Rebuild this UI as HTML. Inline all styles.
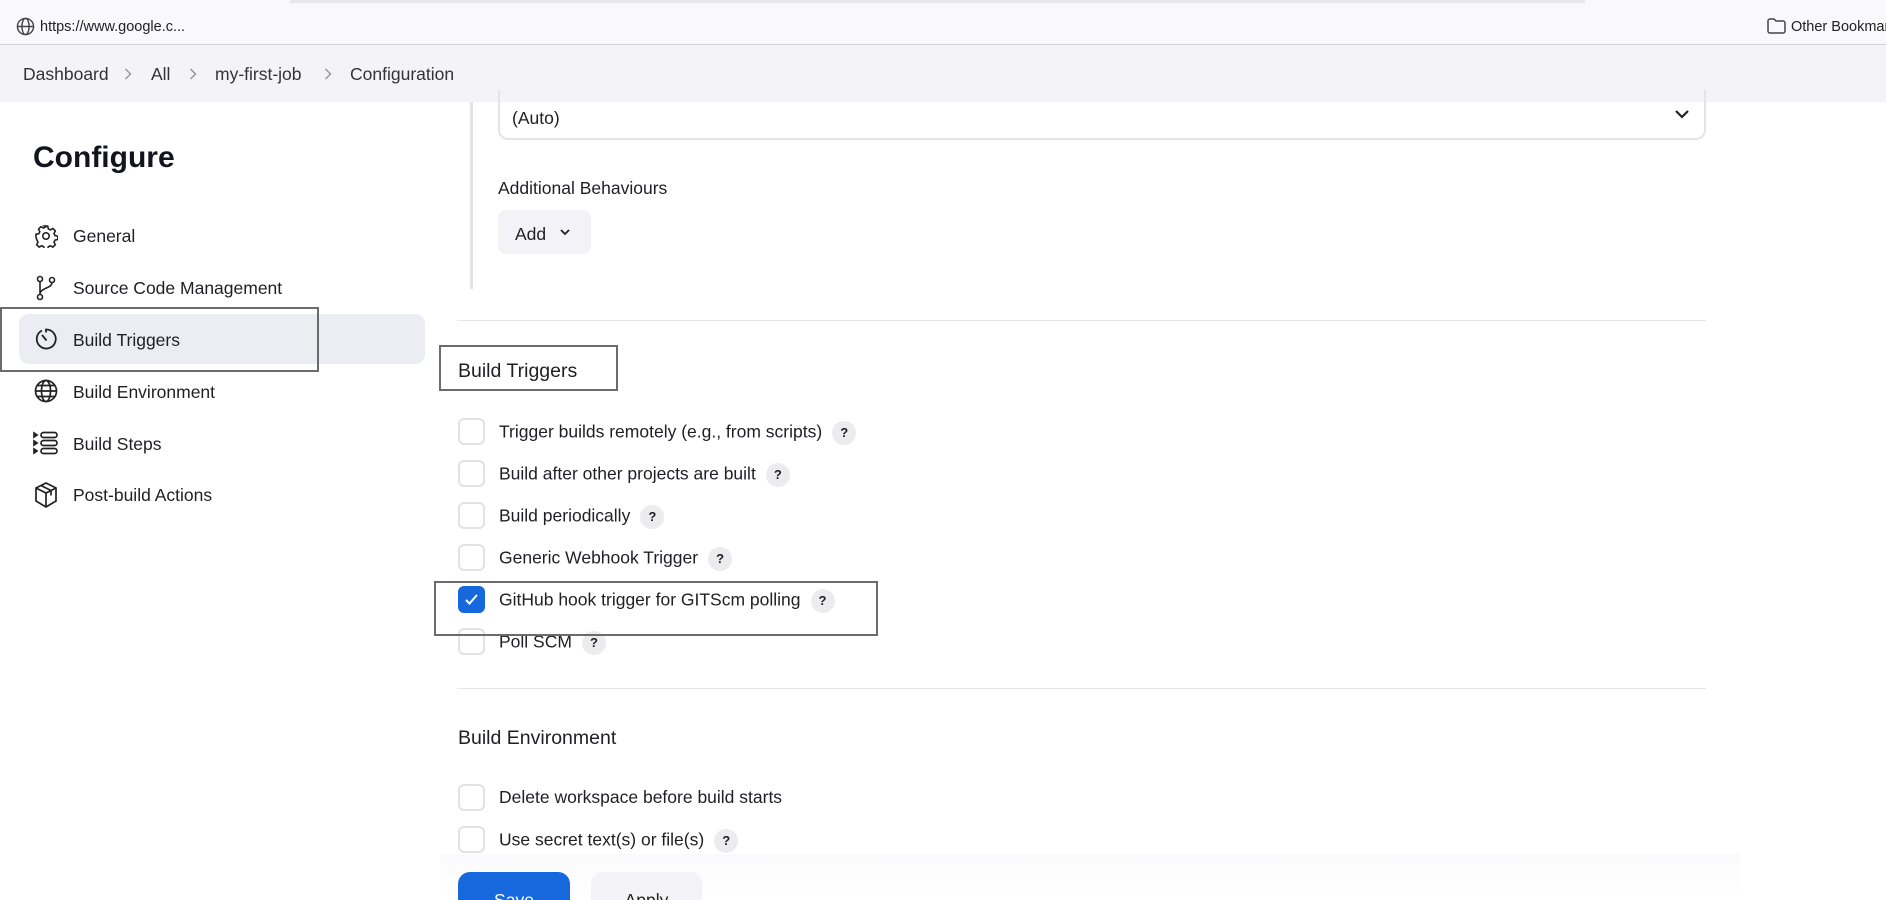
<!DOCTYPE html>
<html><head><meta charset="utf-8"><style>
*{margin:0;padding:0;box-sizing:border-box}
html,body{width:1886px;height:900px;overflow:hidden}
body{background:#fff;font-family:"Liberation Sans",sans-serif;color:#1f1f24;position:relative}
.a{position:absolute;white-space:nowrap}
.topbar{position:absolute;left:0;top:0;width:1886px;height:45px;background:#f9f9fb;border-bottom:1px solid #d3d3d6}
.crumb{position:absolute;left:0;top:45px;width:1886px;height:57px;background:#f4f4f7}
.side{font-size:17.5px}
.cb{position:absolute;width:27px;height:27px;border:2px solid #e2e2e6;border-radius:6px;background:#fff}
.lbl{font-size:17.5px;position:absolute;white-space:nowrap}
.q{display:inline-block;width:24px;height:24px;border-radius:12px;background:#ececef;font-size:13px;font-weight:bold;text-align:center;line-height:24px;margin-left:10px;vertical-align:middle;color:#222}
.box{position:absolute;border:2.5px solid #6b6b6b}
svg{position:absolute}
</style></head><body>
<div class="topbar"></div>
<svg style="left:16px;top:17px" width="19" height="19" viewBox="0 0 20 20" fill="none" stroke="#444" stroke-width="1.5"><circle cx="10" cy="10" r="8.5"/><ellipse cx="10" cy="10" rx="3.8" ry="8.5"/><path d="M1.5 10h17"/></svg>
<div class="a" style="left:40px;top:19px;font-size:14.5px;color:#222">https://www.google.c...</div>
<div class="a" style="left:290px;top:0;width:1295px;height:3px;background:#e8e8ea"></div>
<svg style="left:1767px;top:18px" width="19" height="16" viewBox="0 0 19 16" fill="none" stroke="#444" stroke-width="1.5"><path d="M1 3a2 2 0 0 1 2-2h4l2 2h7a2 2 0 0 1 2 2v8a2 2 0 0 1-2 2H3a2 2 0 0 1-2-2z"/></svg>
<div class="a" style="left:1791px;top:19px;font-size:14.5px;color:#222">Other Bookmarks</div>
<div class="crumb"></div>
<div class="a" style="left:23px;top:64px;font-size:17.5px;color:#333">Dashboard</div>
<svg style="left:124px;top:67px" width="8" height="14" viewBox="0 0 8 14" fill="none" stroke="#999" stroke-width="1.5"><path d="M1.5 2l5 5-5 5"/></svg>
<div class="a" style="left:151px;top:64px;font-size:17.5px;color:#333">All</div>
<svg style="left:189px;top:67px" width="8" height="14" viewBox="0 0 8 14" fill="none" stroke="#999" stroke-width="1.5"><path d="M1.5 2l5 5-5 5"/></svg>
<div class="a" style="left:215px;top:64px;font-size:17.5px;color:#333">my-first-job</div>
<svg style="left:324px;top:67px" width="8" height="14" viewBox="0 0 8 14" fill="none" stroke="#999" stroke-width="1.5"><path d="M1.5 2l5 5-5 5"/></svg>
<div class="a" style="left:350px;top:64px;font-size:17.5px;color:#333">Configuration</div>

<div class="a" style="left:33px;top:141px;font-size:30px;font-weight:bold;color:#14141f">Configure</div>
<div class="a" style="left:19px;top:314px;width:406px;height:50px;background:#ececf3;border-radius:10px"></div>
<div class="box" style="left:0;top:307px;width:319px;height:65px"></div>
<svg style="left:34px;top:224px" width="24" height="24" viewBox="0 0 24 24" fill="none" stroke="#222" stroke-width="1.6"><circle cx="12" cy="12" r="3.2"/><path d="M10.3 2h3.4l.6 2.8 2 1 2.6-1.3 2.4 2.4-1.3 2.6 1 2 2.8.6v3.4l-2.8.6-1 2 1.3 2.6-2.4 2.4-2.6-1.3-2 1-.6 2.8h-3.4l-.6-2.8-2-1-2.6 1.3-2.4-2.4 1.3-2.6-1-2L2 13.7v-3.4l2.8-.6 1-2-1.3-2.6 2.4-2.4 2.6 1.3 2-1z"/></svg>
<div class="a side" style="left:73px;top:226px">General</div>
<svg style="left:34px;top:275px" width="24" height="26" viewBox="0 0 24 26" fill="none" stroke="#222" stroke-width="1.6"><circle cx="6" cy="4" r="2.5"/><circle cx="6" cy="22" r="2.5"/><circle cx="18" cy="5" r="2.5"/><path d="M6 6.5v13M18 7.5c0 6-12 5-12 12"/></svg>
<div class="a side" style="left:73px;top:278px">Source Code Management</div>
<svg style="left:34px;top:327px" width="24" height="24" viewBox="0 0 24 24" fill="none" stroke="#222" stroke-width="1.8"><path d="M8 3.5A9.5 9.5 0 1 0 12 2.5v3"/><path d="M8 8l4.5 5.5"/></svg>
<div class="a side" style="left:73px;top:330px">Build Triggers</div>
<svg style="left:34px;top:379px" width="24" height="24" viewBox="0 0 24 24" fill="none" stroke="#222" stroke-width="1.7"><circle cx="12" cy="12" r="10.5"/><ellipse cx="12" cy="12" rx="4.5" ry="10.5"/><path d="M1.5 12h21M3 6.5h18M3 17.5h18"/></svg>
<div class="a side" style="left:73px;top:382px">Build Environment</div>
<svg style="left:33px;top:431px" width="26" height="24" viewBox="0 0 26 24" fill="none" stroke="#222" stroke-width="1.7"><path d="M1 2l3 2-3 2zM1 10l3 2-3 2zM1 18l3 2-3 2z" fill="#222"/><rect x="8" y="1.5" width="16" height="5" rx="2.5"/><rect x="8" y="9.5" width="16" height="5" rx="2.5"/><rect x="8" y="17.5" width="16" height="5" rx="2.5"/></svg>
<div class="a side" style="left:73px;top:434px">Build Steps</div>
<svg style="left:34px;top:482px" width="24" height="26" viewBox="0 0 24 26" fill="none" stroke="#222" stroke-width="1.7"><path d="M12 1l10 5v13l-10 6-10-6V6z"/><path d="M2 6l10 5 10-5M12 11v14M7 3.5l10 5v5"/></svg>
<div class="a side" style="left:73px;top:485px">Post-build Actions</div>

<div class="a" style="left:470px;top:102px;width:3px;height:187px;background:#e3e3e6"></div>
<div class="a" style="left:498px;top:90px;width:1208px;height:50px;border:2px solid #e4e4e8;border-top:none;border-radius:0 0 10px 10px"></div>
<div class="a" style="left:512px;top:108px;font-size:17.5px">(Auto)</div>
<svg style="left:1674px;top:108px" width="16" height="12" viewBox="0 0 16 12" fill="none" stroke="#222" stroke-width="2.2"><path d="M2 3l6 6 6-6"/></svg>
<div class="a" style="left:498px;top:178px;font-size:17.5px">Additional Behaviours</div>
<div class="a" style="left:498px;top:210px;width:93px;height:44px;background:#f3f3f7;border-radius:8px"></div>
<div class="a" style="left:515px;top:224px;font-size:17.5px">Add</div>
<svg style="left:559px;top:228px" width="12" height="9" viewBox="0 0 12 9" fill="none" stroke="#222" stroke-width="1.8"><path d="M2 2l4 4 4-4"/></svg>
<div class="a" style="left:457px;top:320px;width:1249px;height:1px;background:#e6e6ea"></div>

<div class="box" style="left:439px;top:345px;width:179px;height:46px"></div>
<div class="a" style="left:458px;top:360px;font-size:19.5px">Build Triggers</div>

<div class="cb" style="left:458px;top:418px"></div><div class="lbl" style="left:499px;top:421px">Trigger builds remotely (e.g., from scripts)<span class="q">?</span></div>
<div class="cb" style="left:458px;top:460px"></div><div class="lbl" style="left:499px;top:463px">Build after other projects are built<span class="q">?</span></div>
<div class="cb" style="left:458px;top:502px"></div><div class="lbl" style="left:499px;top:505px">Build periodically<span class="q">?</span></div>
<div class="cb" style="left:458px;top:544px"></div><div class="lbl" style="left:499px;top:547px">Generic Webhook Trigger<span class="q">?</span></div>
<div class="cb" style="left:458px;top:586px;background:#1668dc;border-color:#1668dc"></div>
<svg style="left:464px;top:593px" width="15" height="13" viewBox="0 0 15 13" fill="none" stroke="#fff" stroke-width="2"><path d="M2 7l3.5 3.5L13 2"/></svg>
<div class="lbl" style="left:499px;top:589px">GitHub hook trigger for GITScm polling<span class="q">?</span></div>
<div class="cb" style="left:458px;top:628px"></div><div class="lbl" style="left:499px;top:631px">Poll SCM<span class="q">?</span></div>
<div class="box" style="left:434px;top:581px;width:444px;height:55px"></div>

<div class="a" style="left:457px;top:688px;width:1249px;height:1px;background:#e6e6ea"></div>
<div class="a" style="left:458px;top:727px;font-size:19.5px">Build Environment</div>
<div class="cb" style="left:458px;top:784px"></div><div class="lbl" style="left:499px;top:787px">Delete workspace before build starts</div>
<div class="cb" style="left:458px;top:826px"></div><div class="lbl" style="left:499px;top:829px">Use secret text(s) or file(s)<span class="q">?</span></div>

<div class="a" style="left:440px;top:854px;width:1300px;height:46px;background:linear-gradient(to bottom,rgba(250,250,252,.95),rgba(255,255,255,.95))"></div>
<div class="a" style="left:458px;top:872px;width:112px;height:56px;background:#1668dc;border-radius:12px;color:#fff;font-size:17.5px;text-align:center;padding-top:18px">Save</div>
<div class="a" style="left:591px;top:872px;width:111px;height:56px;background:#f3f3f7;border-radius:12px;color:#222;font-size:17.5px;text-align:center;padding-top:18px">Apply</div>
</body></html>
